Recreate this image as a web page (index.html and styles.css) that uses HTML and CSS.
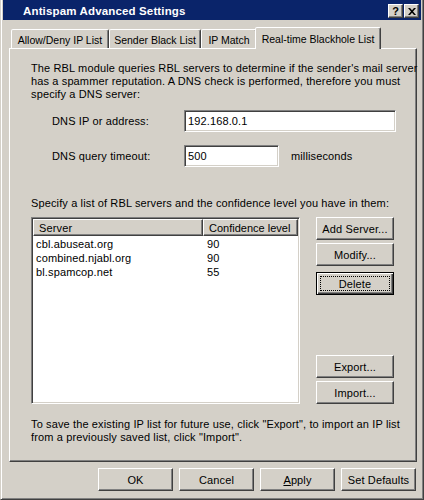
FILE: index.html
```html
<!DOCTYPE html>
<html>
<head>
<meta charset="utf-8">
<title>Antispam Advanced Settings</title>
<link rel="stylesheet" href="styles.css">
</head>
<body>
<div class="window">
  <div class="titlebar">
    <span class="title">Antispam Advanced Settings</span>
    <div class="caption-btns">
      <span class="cbtn help">?</span>
      <span class="cbtn close"><svg width="8" height="7" viewBox="0 0 8 7"><path d="M0 0h2l2 2.2L6 0h2L5 3.5 8 7H6L4 4.8 2 7H0l3-3.5z" fill="#000"/></svg></span>
    </div>
  </div>
  <div class="main">
    <div class="tabs">
      <div class="tab t1">Allow/Deny IP List</div>
      <div class="tab t2">Sender Black List</div>
      <div class="tab t3">IP Match</div>
      <div class="tab active">Real-time Blackhole List</div>
    </div>
    <div class="panel">
      <p class="desc">The RBL module queries RBL servers to determine if the sender's mail server<br>has a spammer reputation. A DNS check is performed, therefore you must<br>specify a DNS server:</p>
      <div class="field f1">
        <span class="label">DNS IP or address:</span>
        <div class="input wide">192.168.0.1</div>
      </div>
      <div class="field f2">
        <span class="label">DNS query timeout:</span>
        <div class="input narrow">500</div>
        <span class="unit">milliseconds</span>
      </div>
      <p class="specify">Specify a list of RBL servers and the confidence level you have in them:</p>
      <div class="list-area">
        <div class="listview">
          <div class="lv-header">
            <div class="hcell c1">Server</div>
            <div class="hcell c2">Confidence level</div>
          </div>
          <div class="lv-rows">
            <div class="row"><span class="c1">cbl.abuseat.org</span><span class="c2">90</span></div>
            <div class="row"><span class="c1">combined.njabl.org</span><span class="c2">90</span></div>
            <div class="row"><span class="c1">bl.spamcop.net</span><span class="c2">55</span></div>
          </div>
        </div>
        <div class="side-btns">
          <div class="btn">Add Server...</div>
          <div class="btn mod">Modify...</div>
          <div class="btn focus del">Delete</div>
          <div class="spacer"></div>
          <div class="btn">Export...</div>
          <div class="btn imp">Import...</div>
        </div>
      </div>
      <p class="note">To save the existing IP list for future use, click "Export", to import an IP list<br>from a previously saved list, click "Import".</p>
    </div>
    <div class="footer">
      <div class="btn fbtn">OK</div>
      <div class="btn fbtn">Cancel</div>
      <div class="btn fbtn"><u>A</u>pply</div>
      <div class="btn fbtn">Set Defaults</div>
    </div>
  </div>
</div>
</body>
</html>
```
FILE: styles.css
```css
* { box-sizing: border-box; }
body {
  margin: 0;
  font-family: "Liberation Sans", Arial, sans-serif;
  font-size: 11px;
  letter-spacing: 0.13px;
  color: #000;
  background: #d4d0c8;
}
.window {
  width: 424px;
  height: 500px;
  border-style: solid;
  border-width: 0 1px 1px 1px;
  border-color: #d4d0c8 #404040 #404040 #d4d0c8;
  box-shadow: inset 1px 0 #fff, inset -1px -1px #808080;
  padding: 0 2px 2px 2px;
  display: flex;
  flex-direction: column;
  background: #d4d0c8;
}
.titlebar {
  height: 20px;
  flex: none;
  background: #0a246a;
  color: #fff;
  display: flex;
  justify-content: space-between;
  align-items: flex-start;
  padding: 3px 2px 0 20px;
}
.title {
  font-weight: bold;
  font-size: 11.5px;
  letter-spacing: 0.15px;
  line-height: 16px;
}
.caption-btns {
  display: flex;
  gap: 1px;
  margin-top: 1px;
}
.cbtn {
  width: 15px;
  height: 14px;
  background: #d4d0c8;
  border: 1px solid;
  border-color: #fff #404040 #404040 #fff;
  box-shadow: inset -1px -1px #808080;
  display: flex;
  align-items: center;
  justify-content: center;
  color: #000;
  font-weight: bold;
  font-size: 11px;
  line-height: 11px;
  letter-spacing: 0;
}
.main {
  flex: 1;
  display: flex;
  flex-direction: column;
}
.tabs {
  display: flex;
  align-items: flex-end;
  height: 21px;
  margin: 7px 0 0 8px;
}
.tab {
  height: 19px;
  padding-top: 2px;
  border: 1px solid;
  border-bottom: 0;
  border-color: #fff #404040 transparent #fff;
  box-shadow: inset -1px 0 #808080;
  border-radius: 2px 2px 0 0;
  display: flex;
  align-items: center;
  justify-content: center;
  white-space: nowrap;
  background: #d4d0c8;
  font-size: 10.5px;
  letter-spacing: 0;
}
.t1 { width: 98px; }
.t2 { width: 92px; }
.t3 { width: 56px; }
.tab.active {
  width: 126px;
  height: 22px;
  margin-left: -2px;
  margin-bottom: -1px;
  padding-top: 0;
  position: relative;
  z-index: 1;
}
.panel {
  height: 414px;
  margin: 0 4px 0 6px;
  border: 1px solid;
  border-color: #fff #404040 #404040 #fff;
  box-shadow: inset -1px -1px #808080;
  padding: 13px 0 0 21px;
}
.desc, .specify, .note {
  margin: 0;
  line-height: 13px;
  white-space: nowrap;
}
.field {
  display: flex;
  align-items: center;
  height: 22px;
  padding-left: 21px;
}
.f1 { margin-top: 9px; }
.f2 { margin-top: 13px; }
.label { width: 132px; }
.input {
  height: 22px;
  background: #fff;
  border: 1px solid;
  border-color: #808080 #fff #fff #808080;
  box-shadow: inset 1px 1px #404040, inset -1px -1px #d4d0c8;
  padding: 0 0 1px 3px;
  display: flex;
  align-items: center;
}
.wide { width: 212px; }
.narrow { width: 95px; }
.unit { margin-left: 12px; }
.specify { margin-top: 30px; }
.list-area {
  margin-top: 7px;
  height: 187px;
  display: flex;
  gap: 16px;
}
.listview {
  width: 269px;
  background: #fff;
  border: 1px solid;
  border-color: #808080 #fff #fff #808080;
  box-shadow: inset 1px 1px #404040, inset -1px -1px #d4d0c8;
  padding: 1px;
}
.lv-header {
  display: flex;
  height: 17px;
}
.hcell {
  background: #d4d0c8;
  border: 1px solid;
  border-color: #fff #404040 #404040 #fff;
  box-shadow: inset -1px -1px #808080;
  display: flex;
  align-items: center;
  white-space: nowrap;
}
.hcell.c1 { width: 170px; padding-left: 5px; }
.hcell.c2 { width: 95px; padding-left: 5px; letter-spacing: 0; }
.lv-rows { padding-top: 1px; }
.row {
  display: flex;
  height: 14px;
  line-height: 14px;
}
.row .c1 { width: 170px; padding-left: 3px; }
.row .c2 { width: 95px; padding-left: 4px; }
.side-btns {
  width: 78px;
  display: flex;
  flex-direction: column;
}
.spacer { flex: 1; }
.btn {
  height: 23px;
  flex: none;
  background: #d4d0c8;
  border: 1px solid;
  border-color: #fff #404040 #404040 #fff;
  box-shadow: inset -1px -1px #808080;
  display: flex;
  align-items: center;
  justify-content: center;
  white-space: nowrap;
}
.btn.mod { margin-top: 3px; }
.btn.del { margin-top: 6px; }
.btn.imp { margin-top: 3px; }
.btn.focus {
  border-color: #000;
  box-shadow: inset 1px 1px #fff, inset -1px -1px #404040, inset -2px -2px #808080;
  outline: 1px dotted #000;
  outline-offset: -5px;
}
.note { margin-top: 14px; }
.footer {
  display: flex;
  justify-content: flex-end;
  gap: 6px;
  margin: 6px 5px 0 0;
}
.fbtn { width: 75px; }
.fbtn u { text-decoration: underline; }
```
